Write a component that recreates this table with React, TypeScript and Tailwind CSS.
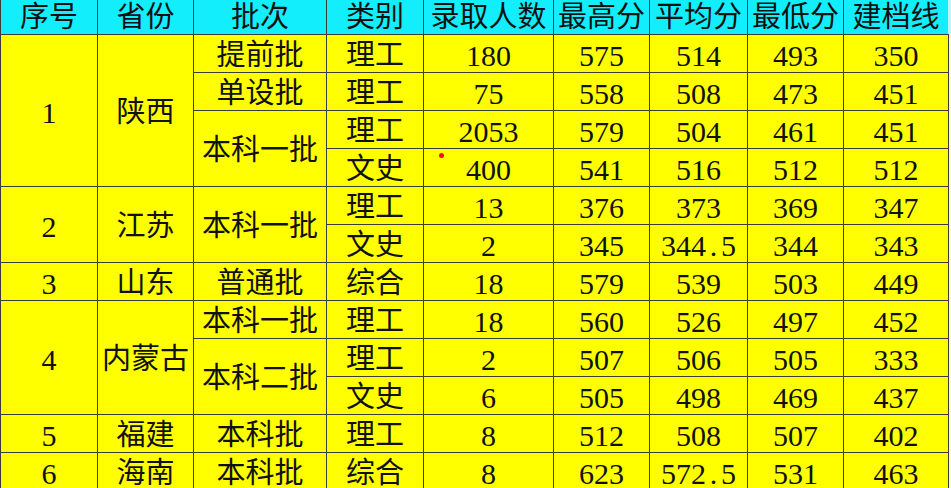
import React from "react";

type Cell = { t: string; rs?: number };

const rows: Cell[][] = [
  [{ t: "1", rs: 4 }, { t: "陕西", rs: 4 }, { t: "提前批" }, { t: "理工" }, { t: "180" }, { t: "575" }, { t: "514" }, { t: "493" }, { t: "350" }],
  [{ t: "单设批" }, { t: "理工" }, { t: "75" }, { t: "558" }, { t: "508" }, { t: "473" }, { t: "451" }],
  [{ t: "本科一批", rs: 2 }, { t: "理工" }, { t: "2053" }, { t: "579" }, { t: "504" }, { t: "461" }, { t: "451" }],
  [{ t: "文史" }, { t: "400" }, { t: "541" }, { t: "516" }, { t: "512" }, { t: "512" }],
  [{ t: "2", rs: 2 }, { t: "江苏", rs: 2 }, { t: "本科一批", rs: 2 }, { t: "理工" }, { t: "13" }, { t: "376" }, { t: "373" }, { t: "369" }, { t: "347" }],
  [{ t: "文史" }, { t: "2" }, { t: "345" }, { t: "344.5" }, { t: "344" }, { t: "343" }],
  [{ t: "3" }, { t: "山东" }, { t: "普通批" }, { t: "综合" }, { t: "18" }, { t: "579" }, { t: "539" }, { t: "503" }, { t: "449" }],
  [{ t: "4", rs: 3 }, { t: "内蒙古", rs: 3 }, { t: "本科一批" }, { t: "理工" }, { t: "18" }, { t: "560" }, { t: "526" }, { t: "497" }, { t: "452" }],
  [{ t: "本科二批", rs: 2 }, { t: "理工" }, { t: "2" }, { t: "507" }, { t: "506" }, { t: "505" }, { t: "333" }],
  [{ t: "文史" }, { t: "6" }, { t: "505" }, { t: "498" }, { t: "469" }, { t: "437" }],
  [{ t: "5" }, { t: "福建" }, { t: "本科批" }, { t: "理工" }, { t: "8" }, { t: "512" }, { t: "508" }, { t: "507" }, { t: "402" }],
  [{ t: "6" }, { t: "海南" }, { t: "本科批" }, { t: "综合" }, { t: "8" }, { t: "623" }, { t: "572.5" }, { t: "531" }, { t: "463" }],
];

const headers = ["序号", "省份", "批次", "类别", "录取人数", "最高分", "平均分", "最低分", "建档线"];
const widths = [97, 96, 133, 97, 130, 96, 98, 96, 105];

function Num({ t }: { t: string }) {
  const parts = t.split(".");
  if (parts.length === 1) return <span className="text-[30px]">{t}</span>;
  return (
    <span className="text-[30px]">
      {parts[0]}
      <span className="inline-block w-[15px] text-center">.</span>
      {parts[1]}
    </span>
  );
}

export default function App() {
  return (
    <div
      className="relative w-[951px] h-[488px] overflow-hidden bg-[#fdfdb8] text-[#111]"
      style={{ fontFamily: '"Liberation Serif", "Noto Sans CJK SC", serif' }}
    >
      <table className="border-collapse table-fixed w-[948px] text-[29px] leading-none">
        <colgroup>
          {widths.map((w, i) => (
            <col key={i} style={{ width: w }} />
          ))}
        </colgroup>
        <thead>
          <tr>
            {headers.map((h, i) => (
              <th
                key={i}
                className="h-[34px] p-0 pt-[1px] font-normal text-center bg-[#12eefb] border border-[#3c3c3c] border-t-0"
              >
                {h}
              </th>
            ))}
          </tr>
        </thead>
        <tbody>
          {rows.map((r, ri) => (
            <tr key={ri}>
              {r.map((c, ci) => (
                <td
                  key={ci}
                  rowSpan={c.rs}
                  className="h-[38px] p-0 pt-[5px] text-center align-middle bg-[#ffff00] border border-[#3c3c3c]"
                >
                  {/^[0-9.]+$/.test(c.t) ? <Num t={c.t} /> : c.t}
                </td>
              ))}
            </tr>
          ))}
        </tbody>
      </table>
      <div className="absolute right-0 top-0 w-[3px] h-[34px] bg-[#b8f8fc]" />
      <div className="absolute left-[439px] top-[153px] w-[5px] h-[5px] rounded-full bg-[#f01010]" />
    </div>
  );
}
